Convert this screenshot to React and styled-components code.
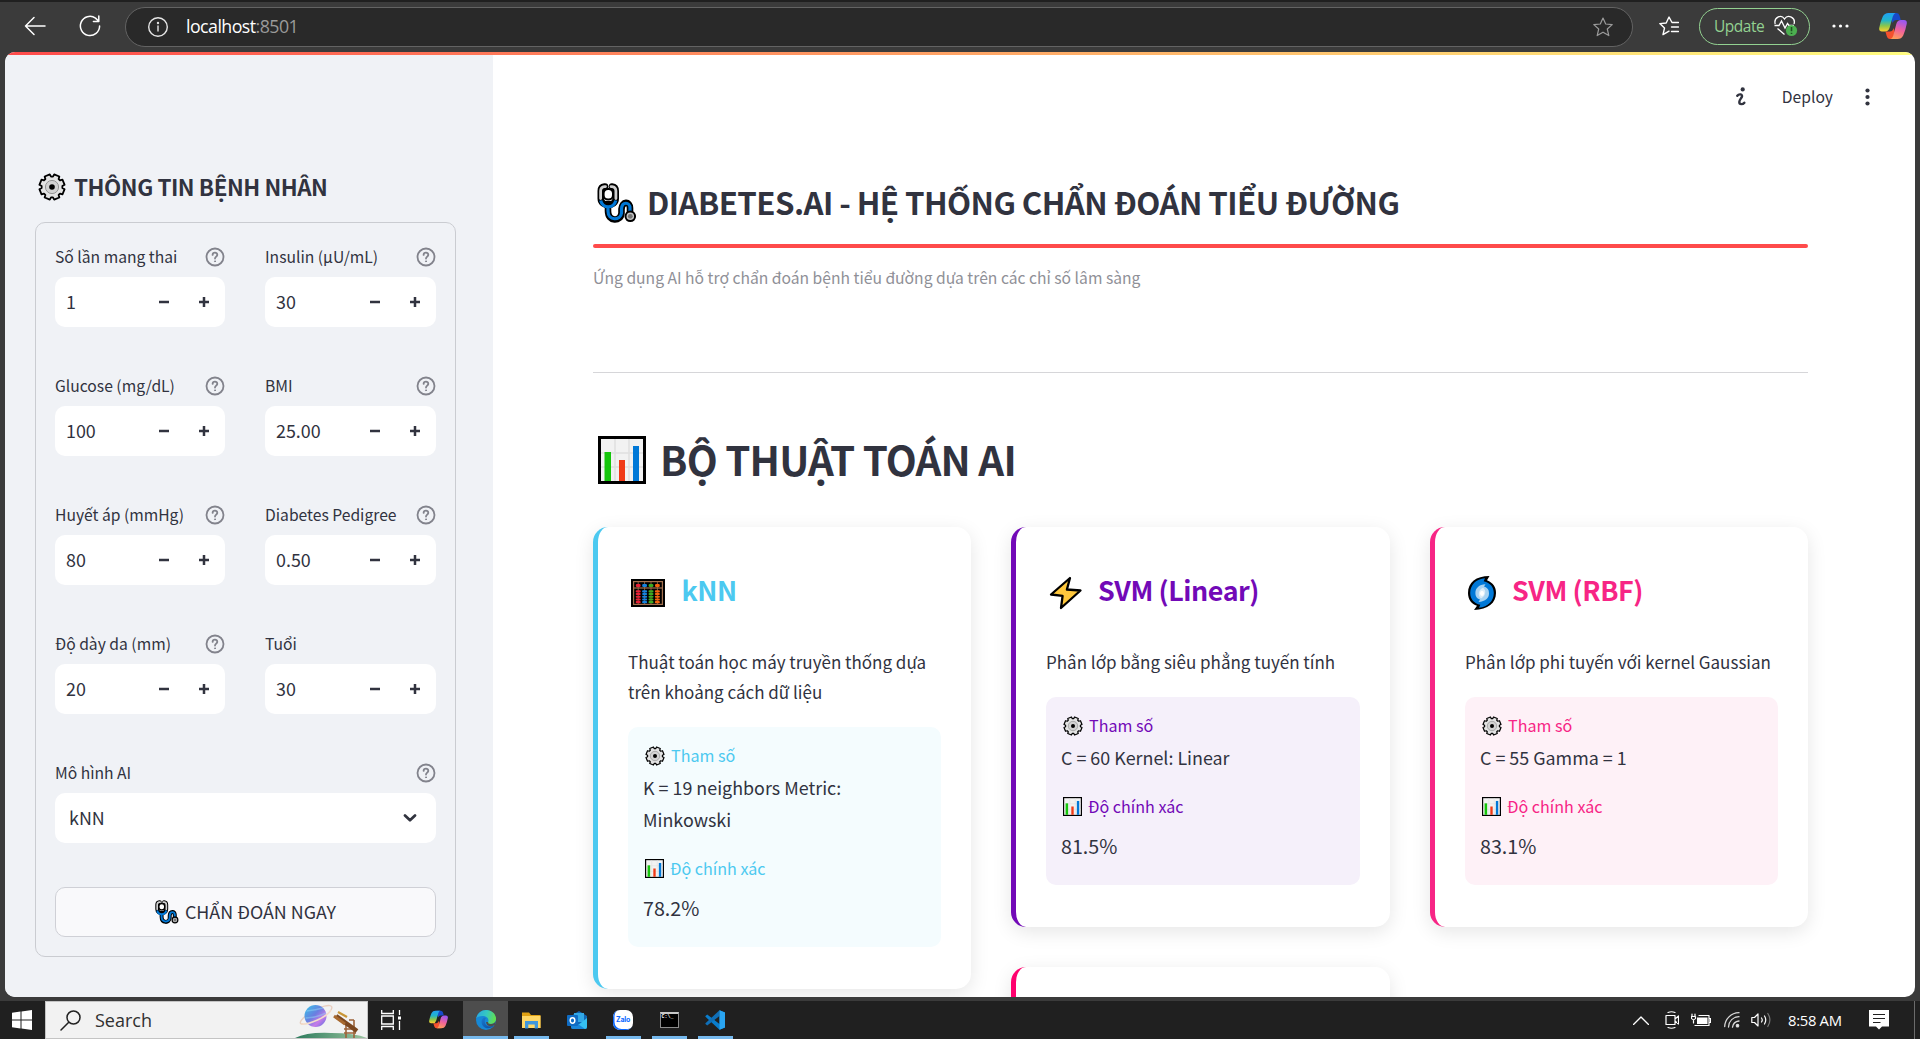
import React from "react";
import styled, { createGlobalStyle } from "styled-components";

const Global = createGlobalStyle`
  * { box-sizing: border-box; }
  html, body { margin: 0; padding: 0; background: #3b3b3b; overflow: hidden; }
  body { font-family: "Noto Sans CJK SC", "Noto Sans", sans-serif; color: #31333f; }
  h1, h2, h3, p { margin: 0; }
  svg { display: block; flex: none; }
`;

const Screen = styled.div`
  width: 1920px;
  height: 1039px;
  display: flex;
  flex-direction: column;
  background: #3b3b3b;
  overflow: hidden;
`;

/* ---------- browser toolbar ---------- */
const Toolbar = styled.header`
  height: 52px;
  flex: none;
  display: flex;
  align-items: center;
  border-top: 2px solid #202020;
  padding: 0 12px 2px 24px;
  color: #fff;
`;
const Address = styled.div`
  width: 1508px;
  height: 40px;
  margin: 1px 26px 0 24px;
  padding: 0 19px 0 22px;
  border: 1px solid #636363;
  border-radius: 20px;
  background: #292929;
  display: flex;
  align-items: center;
  justify-content: space-between;
`;
const AddressLeft = styled.div`
  display: flex;
  align-items: center;
  gap: 18px;
`;
const Url = styled.span`
  height: 27px;
  font: 17.8px/26px "Open Sans", "Noto Sans", sans-serif;
  letter-spacing: -0.55px;
  color: #fff;
`;
const Port = styled.span`
  color: #9a9a9a;
`;
const UpdatePill = styled.div`
  width: 111px;
  height: 37px;
  margin: 1px 22px 0 20px;
  border: 1px solid #93d191;
  border-radius: 19px;
  display: flex;
  align-items: center;
  justify-content: space-between;
  padding: 0 11px 1px 14px;
  color: #93d191;
  font: 15.5px/22px "Open Sans", sans-serif;
  letter-spacing: -0.5px;
`;

/* ---------- page ---------- */
const Page = styled.div`
  width: 1910px;
  height: 945px;
  margin-left: 5px;
  flex: none;
  border-radius: 10px;
  overflow: hidden;
  background: #fff;
  display: flex;
  flex-direction: column;
`;
const Decoration = styled.div`
  height: 3px;
  flex: none;
  background: linear-gradient(90deg, #ff4b4b, #fffd80);
`;
const Body = styled.div`
  flex: 1;
  min-height: 0;
  display: flex;
`;
const Sidebar = styled.aside`
  width: 488px;
  flex: none;
  background: #f0f2f6;
  padding: 112px 37px 0 30px;
`;
const SideTitle = styled.h3`
  display: flex;
  align-items: center;
  gap: 8px;
  height: 40px;
  margin-bottom: 15px;
  padding-left: 3px;
  font-size: 22.4px;
  line-height: 38px;
  font-weight: 600;
  white-space: nowrap;
  letter-spacing: -0.45px;
`;
const Lifted = styled.span`
  padding-bottom: 2px;
`;
const Form = styled.form`
  height: 735px;
  border: 1px solid #caccd1;
  border-radius: 10px;
  padding: 21px 19px 0;
`;
const Fields = styled.div`
  display: grid;
  grid-template-columns: 170px 171px;
  column-gap: 40px;
`;
const FieldBox = styled.div`
  height: 129px;
`;
const LabelRow = styled.div`
  display: flex;
  justify-content: space-between;
  align-items: center;
  height: 26px;
  margin-bottom: 7px;
  font-size: 15.67px;
  line-height: 26px;
  white-space: nowrap;
`;
const NumberInput = styled.div`
  height: 50px;
  border-radius: 10px;
  background: #fff;
  display: flex;
  align-items: center;
  padding-left: 11px;
  font-size: 17.9px;
  line-height: 50px;
`;
const InputValue = styled.span`
  flex: 1;
  height: 52px;
`;
const Step = styled.span`
  width: 40px;
  display: flex;
  justify-content: center;
  &:last-child { margin-right: 1px; }
`;
const Select = styled.div`
  height: 50px;
  border-radius: 10px;
  background: #fff;
  display: flex;
  align-items: center;
  justify-content: space-between;
  padding: 0 19px 0 14px;
  font-size: 17.9px;
  line-height: 48px;
`;
const Submit = styled.button`
  width: 381px;
  height: 50px;
  margin-top: -2px;
  border: 1px solid #cfd0d6;
  border-radius: 10px;
  background: #f9f9fb;
  display: flex;
  align-items: center;
  justify-content: center;
  gap: 6px;
  color: #31333f;
  font-family: inherit;
  font-size: 17.9px;
  line-height: 46px;
  white-space: nowrap;
  padding: 0;
`;
const Main = styled.main`
  flex: 1;
  min-width: 0;
  padding: 0 107px 0 100px;
  display: flex;
  flex-direction: column;
`;
const AppHeader = styled.div`
  height: 75px;
  flex: none;
  margin-right: -70px;
  display: flex;
  justify-content: flex-end;
  align-items: center;
  padding-top: 8px;
  font-size: 15.67px;
  line-height: 24px;
`;
const DeployLabel = styled.span`
  margin: 0 25px 0 36px;
`;
const Title = styled.h1`
  height: 60px;
  flex: none;
  margin-top: 43px;
  padding-left: 4px;
  display: flex;
  align-items: center;
  gap: 10px;
  font-size: 31.3px;
  line-height: 58px;
  font-weight: 600;
  letter-spacing: -0.59px;
  white-space: nowrap;
`;
const Divider = styled.div`
  height: 4px;
  flex: none;
  margin-top: 11px;
  border-radius: 2px;
  background: #ff4b4b;
`;
const Caption = styled.p`
  margin-top: 17px;
  height: 26px;
  font-size: 15.67px;
  line-height: 26px;
  color: #8f9097;
`;
const Rule = styled.hr`
  width: 100%;
  height: 1px;
  flex: none;
  border: 0;
  margin: 81px 0 0;
  background: #d6d6d9;
`;
const Section = styled.h2`
  height: 70px;
  flex: none;
  margin: 52px 0 32px;
  padding-left: 5px;
  display: flex;
  align-items: center;
  gap: 14px;
  font-size: 40.3px;
  line-height: 68px;
  font-weight: 600;
  letter-spacing: -0.8px;
  white-space: nowrap;
`;
const Cards = styled.div`
  display: grid;
  grid-template-columns: 378px 379px 378px;
  column-gap: 40px;
  align-items: start;
`;
const Column = styled.div`
  display: flex;
  flex-direction: column;
  gap: 40px;
`;
const CardBox = styled.article`
  border-left: 5px solid ${(p) => p.$color};
  border-radius: 15px;
  background: #fff;
  box-shadow: 0 5px 19px rgba(0, 0, 0, 0.1);
  padding: 36px 30px 42px;
  min-height: 100px;
`;
const CardHead = styled.h3`
  height: 60px;
  display: flex;
  align-items: center;
  gap: ${(p) => p.$gap}px;
  padding-left: 3px;
  color: ${(p) => p.$color};
  font-size: 26.86px;
  line-height: 54px;
  font-weight: 600;
  letter-spacing: -0.45px;
  white-space: nowrap;
`;
const HeadText = styled.span`
  height: 60px;
`;
const CardDesc = styled.p`
  margin-top: 24px;
  margin-bottom: 20px;
  font-size: 17px;
  line-height: 30.2px;
  white-space: pre-line;
`;
const Params = styled.div`
  border-radius: 10px;
  background: ${(p) => p.$bg};
  padding: 15px 15px 19.5px;
`;
const ParamLabel = styled.div`
  display: flex;
  align-items: center;
  gap: ${(p) => p.$gap}px;
  padding-left: 2px;
  height: 27px;
  font-size: 16.1px;
  line-height: 27px;
  color: ${(p) => p.$color};
  white-space: nowrap;
`;
const ParamText = styled.p`
  margin: 1.8px 0 20.2px;
  font-size: 17.9px;
  line-height: 32px;
  white-space: pre-line;
`;
const Accuracy = styled.p`
  margin-top: 5.5px;
  height: 40px;
  font-size: 19.7px;
  line-height: 40px;
`;

/* ---------- taskbar ---------- */
const Taskbar = styled.footer`
  height: 38px;
  margin-top: 4px;
  flex: none;
  display: flex;
  align-items: center;
  background: #202020;
`;
const StartCell = styled.div`
  width: 45px;
  display: flex;
  justify-content: center;
  padding-right: 1px;
`;
const SearchBox = styled.div`
  width: 323px;
  height: 38px;
  border: 1px solid #c4c4c4;
  background: #f2f2f2;
  display: flex;
  align-items: center;
  padding-left: 14px;
  color: #303030;
  font: 18px/36px "Open Sans", sans-serif;
  overflow: hidden;
`;
const SearchLabel = styled.span`
  margin-left: 14px;
  flex: 1;
`;
const TaskCell = styled.div`
  width: ${(p) => p.$w || 46}px;
  height: 38px;
  display: flex;
  flex-direction: column;
  align-items: center;
  justify-content: space-between;
  padding-top: 9px;
  background: ${(p) => (p.$active ? "#4d4d4d" : "transparent")};
`;
const Underline = styled.div`
  height: 3px;
  width: ${(p) => (p.$active ? "100%" : "35px")};
  background: ${(p) => (p.$on ? "#76b9ed" : "transparent")};
`;
const Tray = styled.div`
  margin-left: auto;
  display: flex;
  align-items: center;
`;
const Clock = styled.span`
  color: #fff;
  width: 54px;
  margin: 0 27px 0 16px;
  font: 14.8px/38px "Open Sans", sans-serif;
  letter-spacing: -0.3px;
  white-space: nowrap;
`;
const Peek = styled.div`
  width: 1px;
  height: 38px;
  margin: 0 5px 0 25px;
  background: #6b6b6b;
`;

/* ---------- icons ---------- */
const gearPath = (() => {
  const pts = [];
  for (let i = 0; i < 8; i++) {
    const a = (i * Math.PI) / 4 + Math.PI / 8;
    [[-0.3, 10.4], [-0.22, 12.8], [0.22, 12.8], [0.3, 10.4]].forEach(([d, r]) =>
      pts.push(`${(14 + r * Math.cos(a + d)).toFixed(2)} ${(14 + r * Math.sin(a + d)).toFixed(2)}`)
    );
  }
  return "M" + pts.join("L") + "Z";
})();
const Gear = ({ size = 28, w = 1.8 }) => (
  <svg width={size} height={size} viewBox="0 0 28 28">
    <path d={gearPath} fill="#e3e3e3" stroke="#000" strokeWidth={w} strokeLinejoin="round" />
    <circle cx="14" cy="14" r="6.6" fill="#d2d2d2" stroke="#8d8d8d" strokeWidth="0.9" />
    <circle cx="14" cy="14" r="2.8" fill="#000" />
  </svg>
);
const Stethoscope = ({ size = 40 }) => (
  <svg width={size} height={size} viewBox="0 0 40 40" fill="none" strokeLinecap="round">
    <path d="M11 23V28C11 39 24 39 24.500 30V26C25 18 33 18 33 25V30" stroke="#000" strokeWidth="6.600" />
    <path d="M8 3.600H7.500Q3.800 4 3.800 8V15.500C3.800 24 18.700 24 18.700 15.500V8Q18.700 4 15 3.600" stroke="#000" strokeWidth="6.600" />
    <path d="M5 18Q11 27 18 18Z" fill="#000" />
    <path d="M8.500 3.600H7.500Q3.600 4 3.600 8V15.500M14 3.600H15Q18.900 4 18.900 8V15.500" stroke="#d0d0d0" strokeWidth="2.800" />
    <rect x="6.600" y="6" width="9.400" height="10.500" rx="4.500" fill="#fff" stroke="#000" strokeWidth="2" />
    <path d="M3.700 17.500C5.500 26 17 26 18.800 17.500M11 25V28C11 38 23.500 38 24.500 30V26C25 18 33 19 33 25V28" stroke="#0078d7" strokeWidth="3.200" strokeLinecap="butt" />
    <circle cx="33.300" cy="33.300" r="4.800" fill="#c3c3c3" stroke="#000" strokeWidth="2" />
    <circle cx="33.300" cy="33.300" r="2.400" fill="#767676" />
  </svg>
);
const Chart = ({ size = 48, b = 3 }) => (
  <svg width={size} height={size} viewBox="0 0 48 48">
    <rect width="48" height="48" fill="#000" />
    <rect x={b} y={b} width={48 - 2 * b} height={48 - 2 * b} fill="#f2f2f2" />
    <path d="M17 3V45M31 3V45M3 17H45M3 31H45" stroke="#e0e0e0" strokeWidth="1.500" />
    <path d="M6.500 16H13V45H6.500Z" fill="#16c60c" />
    <path d="M21 24H27V45H21Z" fill="#f03a17" />
    <path d="M35 10H41V45H35Z" fill="#0078d7" />
  </svg>
);
const Abacus = () => (
  <svg width="34" height="28" viewBox="0 0 34 28">
    <rect width="34" height="28" fill="#000" />
    <rect x="2.600" y="2.600" width="28.800" height="22.800" fill="none" stroke="#a5714e" strokeWidth="1.200" />
    <path d="M3 9H31" stroke="#a5714e" strokeWidth="1.200" />
    {["#e81f36", "#1683e0", "#3cab22", "#f7630c"].map((c, i) => (
      <g key={c} fill={c}>
        <path d={`M${7.2 + i * 6.4} 3V25`} stroke="#a5714e" strokeWidth="0.800" />
        <rect x={4.8 + i * 6.4} y="5" width="4.800" height="3" rx="1.200" />
        {[0, 1, 2, 3, 4].map((k) => (
          <rect key={k} x={4.7 + i * 6.4} y={11.3 + k * 2.7} width="5" height="2.100" rx="1" />
        ))}
      </g>
    ))}
  </svg>
);
const Bolt = () => (
  <svg width="34" height="34" viewBox="0 0 34 34">
    <path d="M21 2 2 18.500 13.600 19.800 12 32 31.500 14.500 17.900 13.500Z" fill="#ffc83d" stroke="#000" strokeWidth="2.300" strokeLinejoin="round" />
  </svg>
);
const Cyclone = () => (
  <svg width="28" height="34" viewBox="0 0 28 34">
    <path d="M21.500 0 19 4.200C25 6.500 28 11 28 17 28 27 20 33.500 6 34L9 29.800C3.500 28 0 23.500 0 17 0 6.500 8 0 21.500 0Z" fill="#000" />
    <path d="M17 2.300 15.700 5.200C22.500 7 25.800 11 25.800 17 25.800 25 20 30.800 11 31.700L12.300 28.800C6 27.500 2.200 23 2.200 17 2.200 9 8 3 17 2.300Z" fill="#0078d7" />
    <path d="M17.500 8.200 16 10.600C20 12 21 14 21 17.500 21 22 17.500 25.500 10.500 26L12 23.600C8.500 22.500 7.400 20 7.400 17 7.400 12 11 8.500 17.500 8.200Z" fill="#a9d3f2" />
    <path d="M15 11.800C18.500 14 18 20 13 22.500 9.500 20 10 14 15 11.800Z" fill="#dcecf8" />
    <ellipse cx="14" cy="17.300" rx="2" ry="2.600" fill="#fff" />
  </svg>
);
const Help = () => (
  <svg width="20" height="20" viewBox="0 0 20 20" fill="none" stroke="#82838c" strokeWidth="1.800" strokeLinecap="round">
    <circle cx="10" cy="10" r="8.500" />
    <path d="M7.600 7.900C7.700 4.900 12.400 5 12.300 7.900 12.200 9.600 10 9.700 10 11.600" />
    <circle cx="10" cy="14.300" r="0.500" fill="#82838c" strokeWidth="1" />
  </svg>
);
const Copilot = ({ size = 28, id }) => (
  <svg width={size} height={size} viewBox="0 0 28 28">
    <defs>
      <linearGradient id={id + "a"} x1="0" y1="0" x2="0" y2="1">
        <stop offset="0" stopColor="#1fa0f5" /><stop offset="0.4" stopColor="#22b5c9" /><stop offset="0.7" stopColor="#8cc64a" /><stop offset="1" stopColor="#ffd02f" />
      </linearGradient>
      <linearGradient id={id + "b"} x1="0.600" y1="0" x2="0.300" y2="1">
        <stop offset="0" stopColor="#9a58f0" /><stop offset="0.500" stopColor="#f0629c" /><stop offset="1" stopColor="#ff9e58" />
      </linearGradient>
    </defs>
    <path d="M11 1H17.500Q19.700 1 20.500 3.400L21.800 8H17Q14.600 8 13.500 11Z" fill="#1749c9" />
    <path d="M17 27H11Q8.600 27 7.700 24L6.400 19.500H11Q13.600 19.500 14.700 16Z" fill="#f4512e" />
    <path d="M9.500 1H16.500Q14.700 1.500 13.800 4.500L10.700 15.500Q9.600 19.500 6 19.500H3Q-0.500 19.500 0.300 15.500Q1.500 9.500 3.800 4.500Q5.500 1 9.500 1Z" fill={`url(#${id}a)`} />
    <path d="M18.500 27H11.500Q13.400 26.500 14.300 23.500L17.300 12Q18.400 8 22 8H25Q28.500 8 27.700 12Q26.500 18.500 24.200 23.500Q22.500 27 18.500 27Z" fill={`url(#${id}b)`} />
  </svg>
);
const Line = ({ w, h, vb, d, sw = 1.4, color = "#fff", children }) => (
  <svg width={w} height={h} viewBox={vb || `0 0 ${w} ${h}`} fill="none" stroke={color} strokeWidth={sw} strokeLinecap="round" strokeLinejoin="round">
    <path d={d} />
    {children}
  </svg>
);
const Gap = styled.span`
  width: ${(p) => p.$w}px;
  flex: none;
`;

const EdgeIcon = () => (
  <svg width="20" height="20" viewBox="0 0 20 20">
    <defs>
      <linearGradient id="edgeTop" x1="0" y1="0.300" x2="1" y2="0.500">
        <stop offset="0" stopColor="#2aa8e0" /><stop offset="0.500" stopColor="#35c8c0" /><stop offset="1" stopColor="#64e04a" />
      </linearGradient>
      <linearGradient id="edgeLow" x1="0" y1="0" x2="1" y2="1">
        <stop offset="0" stopColor="#1b7ad0" /><stop offset="1" stopColor="#0c4a9c" />
      </linearGradient>
    </defs>
    <circle cx="10" cy="10" r="10" fill="#1688d6" />
    <path d="M0.200 8.500C1.500 3 5.500 0 10.200 0 16 0 20 4.200 20 8.700 20 12 17.500 14 14.800 14 12.500 14 11.400 13.200 12 12.300 13.500 9.500 11.500 6.500 7.500 6 4.500 5.700 1.500 6.500 0.200 8.500Z" fill="url(#edgeTop)" />
    <path d="M8 7.500C5 9 4.500 14 8 17 10.500 19.200 15.500 18.500 18 15.800 13.500 17.500 9.500 16 8.800 12.500 8.400 10.500 9 9 10 8.200 9.500 7.500 8.800 7.300 8 7.500Z" fill="url(#edgeLow)" />
    <path d="M12.300 12C11.500 13.300 12.600 14 14.800 14 17 14 19 12.800 19.700 11L19 15 15 16.500Q10.500 16 10 12Z" fill="#4d4d4d" />
  </svg>
);
const FolderIcon = () => (
  <svg width="19" height="20" viewBox="0 0 19 20">
    <path d="M0 2.500H7L9 5H18.500V18H0Z" fill="#e0a113" />
    <path d="M0 6H18.500V18H0Z" fill="#ffd766" />
    <path d="M3 11H16V18.500H12.700V14.500H6.300V18.500H3Z" fill="#3f97dc" />
  </svg>
);
const OutlookIcon = () => (
  <svg width="20" height="20" viewBox="0 0 20 20">
    <path d="M4 6 12 1 20 6V17Q20 19 18 19H6Q4 19 4 17Z" fill="#1066b5" />
    <path d="M7 3H17V12H7Z" fill="#32a8e6" />
    <path d="M20 8V17Q20 19 18 19H6L20 8Z" fill="#35c0f0" />
    <path d="M4 9 18 19H6Q4 19 4 17Z" fill="#1a86d9" />
    <rect x="0" y="5" width="11" height="11" rx="1" fill="#0f6cc4" />
    <ellipse cx="5.500" cy="10.500" rx="2.300" ry="2.700" fill="none" stroke="#fff" strokeWidth="1.500" />
  </svg>
);
const ZaloBadge = styled.div`
  width: 20px;
  height: 20px;
  border-radius: 7px;
  background: #fff;
  box-shadow: inset 1.5px -1px 0 #0a68ff;
  color: #0a68ff;
  font: 700 7px/19px Inter, sans-serif;
  letter-spacing: -0.2px;
  text-align: center;
`;
const Terminal = styled.div`
  width: 19px;
  height: 16px;
  margin: 2px 0;
  background: #000;
  border: 1px solid #8c8c8c;
  border-top: 2px solid #c8c8c8;
  color: #fff;
  font: 700 5px/7px "Liberation Mono", monospace;
  padding-left: 1px;
  overflow: hidden;
`;
const CodeIcon = () => (
  <svg width="20" height="20" viewBox="0 0 20 20">
    <path d="M14.500 0.200 20 2.500V17.500L14.500 19.800 1 7.200 0.200 6.200 2.200 4.500 14.500 14Z" fill="#0a7dcc" />
    <path d="M14.500 6 2.200 15.500 0.200 13.800 1 12.800 14.500 0.200Z" fill="#0f6fb8" />
    <path d="M14.500 0.200 20 2.500V17.500L14.500 19.800Z" fill="#2aa5f2" />
  </svg>
);
const SearchArt = () => (
  <svg width="72" height="36" viewBox="0 0 72 36">
    <defs>
      <linearGradient id="planet" x1="0" y1="0" x2="1" y2="1">
        <stop offset="0" stopColor="#35c7e8" /><stop offset="0.450" stopColor="#6a7ee0" /><stop offset="0.700" stopColor="#c77be8" /><stop offset="1" stopColor="#4e6fe0" />
      </linearGradient>
      <linearGradient id="hill" x1="0" y1="0" x2="1" y2="0">
        <stop offset="0" stopColor="#2c7a5c" /><stop offset="1" stopColor="#9cc5a0" />
      </linearGradient>
    </defs>
    <path d="M8 22C0 22 11 12 24 6 34 2 39 3 36 8" fill="none" stroke="#e9cfc0" strokeWidth="1.400" />
    <circle cx="20.500" cy="14" r="11" fill="url(#planet)" />
    <path d="M11.500 9Q21 8 28 6M10.500 16Q21 16 31 11" stroke="#8fd3f5" strokeWidth="1.500" opacity="0.500" fill="none" />
    <path d="M36 8C32 15 14 23 6 22" fill="none" stroke="#f3dccb" strokeWidth="1.600" />
    <path d="M0 36Q12 30 36 31 60 31 72 36Z" fill="url(#hill)" />
    <path d="M51 22V36M59 18V36M49 27H61M49 31H61M54 18H59" stroke="#9c6239" strokeWidth="1.600" />
    <path d="M41 14 62 29" stroke="#7b4720" strokeWidth="4.500" />
    <path d="M39 14 50 22" stroke="#a8692f" strokeWidth="3" />
    <path d="M43 10 52 15" stroke="#c99637" strokeWidth="2.200" />
  </svg>
);

/* ---------- parts ---------- */
const Label = ({ text, help }) => (
  <LabelRow>
    <span>{text}</span>
    {help && <Help />}
  </LabelRow>
);
const Field = ({ label, value, help = true }) => (
  <FieldBox>
    <Label text={label} help={help} />
    <NumberInput>
      <InputValue>{value}</InputValue>
      <Step>
        <svg width="10" height="10"><path d="M0 5H10" stroke="#31333f" strokeWidth="2.500" /></svg>
      </Step>
      <Step>
        <svg width="10" height="10"><path d="M0 5H10M5 0V10" stroke="#31333f" strokeWidth="2.500" /></svg>
      </Step>
    </NumberInput>
  </FieldBox>
);
const ModelCard = ({ color, bg, icon, gap, name, desc, params, accuracy }) => (
  <CardBox $color={color}>
    <CardHead $color={color} $gap={gap}>
      {icon}
      <HeadText>{name}</HeadText>
    </CardHead>
    <CardDesc>{desc}</CardDesc>
    <Params $bg={bg}>
      <ParamLabel $color={color} $gap={6}><Gear size={20} w={1.7} />Tham số</ParamLabel>
      <ParamText>{params}</ParamText>
      <ParamLabel $color={color} $gap={6}><Chart size={19} b={3} />Độ chính xác</ParamLabel>
      <Accuracy>{accuracy}</Accuracy>
    </Params>
  </CardBox>
);

const fields = [
  ["Số lần mang thai", "1"],
  ["Insulin (µU/mL)", "30"],
  ["Glucose (mg/dL)", "100"],
  ["BMI", "25.00"],
  ["Huyết áp (mmHg)", "80"],
  ["Diabetes Pedigree", "0.50"],
  ["Độ dày da (mm)", "20"],
  ["Tuổi", "30", false],
];
const tasks = [
  { icon: <EdgeIcon />, active: true, on: true, w: 45 },
  { icon: <FolderIcon />, on: true },
  { icon: <OutlookIcon /> },
  { icon: <ZaloBadge>Zalo</ZaloBadge>, on: true },
  { icon: <Terminal>C:\_</Terminal>, on: true },
  { icon: <CodeIcon />, on: true },
];

export default function App() {
  return (
    <Screen>
      <Global />
      <Toolbar>
        <Line w={22} h={20} d="M21 10H1.500M10 1.500 1.500 10 10 18.500" sw={1.5} />
        <Gap $w={33} />
        <Line w={22} h={22} d="M20.600 11A9.600 9.600 0 1 1 16.500 3.100L19.500 6M19.800 1V6.400H14.400" sw={1.5} />
        <Address>
          <AddressLeft>
            <Line w={20} h={20} d="M10 9V14" sw={1.4} color="#e6e6e6">
              <circle cx="10" cy="10" r="9.300" />
              <circle cx="10" cy="6" r="0.500" />
            </Line>
            <Url>localhost<Port>:8501</Port></Url>
          </AddressLeft>
          <Line w={20} h={20} d="M10 1 12.700 7 19.200 7.600 14.300 12 15.800 18.600 10 15.200 4.200 18.600 5.700 12 0.800 7.600 7.300 7Z" sw={1.2} color="#9b9b9b" />
        </Address>
        <Line w={20} h={20} d="M19.500 6.500H13L10 1 7.200 7 0.800 7.600 5.500 12 4 18.600 10 15.200M12.500 11H19.500M12.500 15.500H19.500" sw={1.4} />
        <UpdatePill>
          Update
          <svg width="24" height="22" viewBox="0 0 24 22" fill="none" stroke="#fff" strokeWidth="1.300">
            <path d="M1.200 9C-0.500 3 7 -1.500 10.500 4 14 -1.500 22 3 20 9M0.500 10.500H5L7.500 6 11 13 13.500 8.500 15 10.500H20M3.500 13.500 10.500 19.500" />
            <circle cx="17.500" cy="15.500" r="5.600" fill="#4caf50" stroke="none" />
            <path d="M17.500 12V16.300M17.500 17.700V19" stroke="#1f4f22" strokeWidth="1.600" />
          </svg>
        </UpdatePill>
        <svg width="17" height="4" fill="#fff"><circle cx="2" cy="2" r="1.600" /><circle cx="8.500" cy="2" r="1.600" /><circle cx="15" cy="2" r="1.600" /></svg>
        <Gap $w={30} />
        <Copilot size={28} id="cpTop" />
      </Toolbar>

      <Page>
        <Decoration />
        <Body>
          <Sidebar>
            <SideTitle><Gear size={28} /><Lifted>THÔNG TIN BỆNH NHÂN</Lifted></SideTitle>
            <Form>
              <Fields>
                {fields.map(([l, v, h]) => <Field key={l} label={l} value={v} help={h} />)}
              </Fields>
              <FieldBox>
                <Label text="Mô hình AI" help />
                <Select>
                  <Lifted>kNN</Lifted>
                  <Line w={14} h={8} d="M2 1.500 7 6.300 12 1.500" sw={2.7} color="#31333f" />
                </Select>
              </FieldBox>
              <Submit type="button"><Stethoscope size={24} /><Lifted>CHẨN ĐOÁN NGAY</Lifted></Submit>
            </Form>
          </Sidebar>
          <Main>
            <AppHeader>
              <svg width="10" height="19" viewBox="0 0 10 19" fill="none" stroke="#31333f" strokeWidth="2.400" strokeLinecap="round">
                <circle cx="6.700" cy="2.400" r="2.100" fill="#31333f" stroke="none" />
                <path d="M1.300 8.800C3 6.500 7 7 5.800 10 5.200 11.500 3.300 13 3.300 15 3.300 18 7 17.500 8.300 15.800" />
              </svg>
              <DeployLabel>Deploy</DeployLabel>
              <svg width="20" height="18" fill="#31333f"><circle cx="9.500" cy="2.500" r="2.100" /><circle cx="9.500" cy="9" r="2.100" /><circle cx="9.500" cy="15.500" r="2.100" /></svg>
            </AppHeader>
            <Title><Stethoscope /><Lifted>DIABETES.AI - HỆ THỐNG CHẨN ĐOÁN TIỂU ĐƯỜNG</Lifted></Title>
            <Divider />
            <Caption>Ứng dụng AI hỗ trợ chẩn đoán bệnh tiểu đường dựa trên các chỉ số lâm sàng</Caption>
            <Rule />
            <Section><Chart /><Lifted>BỘ THUẬT TOÁN AI</Lifted></Section>
            <Cards>
              <Column>
                <ModelCard color="#4cc9f0" bg="#f4fcfe" icon={<Abacus />} gap={16.5} name="kNN"
                  desc={"Thuật toán học máy truyền thống dựa\ntrên khoảng cách dữ liệu"}
                  params={"K = 19 neighbors Metric:\nMinkowski"} accuracy="78.2%" />
              </Column>
              <Column>
                <ModelCard color="#7209b7" bg="#f5f0fa" icon={<Bolt />} gap={15} name="SVM (Linear)"
                  desc="Phân lớp bằng siêu phẳng tuyến tính"
                  params="C = 60 Kernel: Linear" accuracy="81.5%" />
                <CardBox $color="#ff006e" />
              </Column>
              <Column>
                <ModelCard color="#f72585" bg="#fef1f7" icon={<Cyclone />} gap={16} name="SVM (RBF)"
                  desc="Phân lớp phi tuyến với kernel Gaussian"
                  params="C = 55 Gamma = 1" accuracy="83.1%" />
              </Column>
            </Cards>
          </Main>
        </Body>
      </Page>

      <Taskbar>
        <StartCell>
          <svg width="20" height="20" fill="#fff"><path d="M0 2.800 8.500 1.600V9.500H0ZM9.500 1.400 20 0V9.500H9.500ZM0 10.500H8.500V18.400L0 17.200ZM9.500 10.500H20V20L9.500 18.600Z" /></svg>
        </StartCell>
        <SearchBox>
          <Line w={21} h={21} d="M8.500 12.500 1 20" sw={1.5} color="#222"><circle cx="13.500" cy="7.500" r="6.500" /></Line>
          <SearchLabel>Search</SearchLabel>
          <SearchArt />
        </SearchBox>
        <TaskCell $w={45}>
          <svg width="20" height="20" viewBox="0 0 20 20" fill="none" stroke="#fff" strokeWidth="1.300">
            <path d="M0.700 0V3.500H12.300V0M0.700 20V16.500H12.300V20M0.700 6H12.300V14H0.700ZM18.500 0V5M18.500 11V20" />
            <path d="M17 6.500H20V9.500H17Z" fill="#fff" stroke="none" />
          </svg>
        </TaskCell>
        <TaskCell $w={50}><Copilot size={19} id="cpTask" /></TaskCell>
        {tasks.map((t, i) => (
          <TaskCell key={i} $active={t.active} $w={t.w}>
            {t.icon}
            <Underline $on={t.on} $active={t.active} />
          </TaskCell>
        ))}
        <Tray>
          <Line w={16} h={9} d="M0.500 8.500 8 1 15.500 8.500" sw={1.4} />
          <Gap $w={16} />
          <Line w={14} h={18} d="M1 4.500H10V13.500H1ZM10 8 13.500 5V13L10 10M3 1.500Q6.500 0 10 1.500M3 16.500Q6.500 18 10 16.500" sw={1.2} />
          <Gap $w={12} />
          <Line w={20} h={14} d="M4 12.500H18V2.500H8M18.500 5.500H19.500V9.500H18.500M1 1V3M4 1V3M0.500 3.500H4.500V5.500Q2.500 8 0.500 5.500ZM2.500 7V10" sw={1.2}>
            <rect x="6" y="4.500" width="10.500" height="6.500" fill="#fff" stroke="none" />
          </Line>
          <Gap $w={13} />
          <Line w={16} h={16} d="M0.700 14.500C1 7 7 1 15 0.700M4.500 15C5 9 9 5 15 4.700M8.500 15.200C9 11.500 11 9.500 15 9" sw={1.3} color="#d8d8d8">
            <circle cx="13.500" cy="13.700" r="1.200" fill="#fff" />
          </Line>
          <Gap $w={11} />
          <Line w={21} h={16} d="M0.800 5.500H3.500L7 2V14L3.500 10.500H0.800ZM10.500 6Q12 8 10.500 10M13.500 4Q16 8 13.500 12" sw={1.2}>
            <path d="M16.800 1.500Q21 8 16.800 14.500" stroke="#777" />
          </Line>
          <Clock>8:58 AM</Clock>
          <svg width="20" height="20"><path d="M0 0H20V16.500H13L10 19.500 7 16.500H0Z" fill="#fff" /><path d="M4 4.500H16M4 8.500H16M4 12.500H11.500" stroke="#202020" strokeWidth="1.200" /></svg>
          <Peek />
        </Tray>
      </Taskbar>
    </Screen>
  );
}
